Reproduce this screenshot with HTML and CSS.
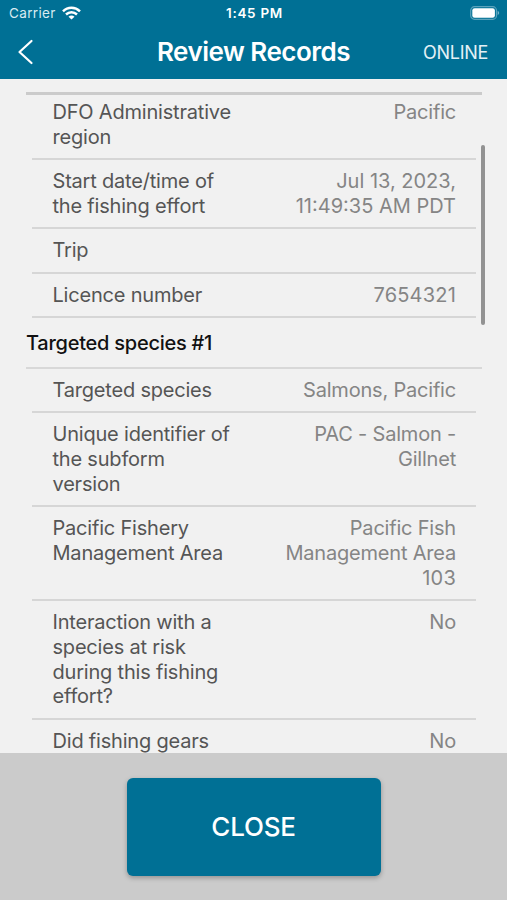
FILE: index.html
```html
<!DOCTYPE html>
<html lang="en">
<head>
<meta charset="utf-8">
<title>Review Records</title>
<link rel="stylesheet" href="styles.css">
</head>
<body>
<div class="app">
  <header class="header">
    <div class="status">
      <div class="carrier"><span>Carrier</span>
        <svg class="wifi" width="19" height="14" viewBox="0 0 19 14" fill="none" stroke="#fff" stroke-width="2.5"><path d="M1 5.3C5.8.6 13.2.6 18 5.3M4 8.5c3.2-3 7.8-3 11 0"/><path d="M9.5 13.6 6.5 10.7c1.7-1.5 4.3-1.5 6 0z" fill="#fff" stroke="none"/></svg>
      </div>
      <div class="clock">1:45 PM</div>
      <svg class="battery" width="30" height="14" viewBox="0 0 30 14"><rect x=".7" y=".7" width="25.8" height="12.6" rx="3.8" fill="none" stroke="#5ba3bc" stroke-width="1.2"/><rect x="2.3" y="2.3" width="22.6" height="9.4" rx="2.3" fill="#fff"/><path d="M27.7 4.8q3 2.2 0 4.4z" fill="#75b4c9"/></svg>
    </div>
    <div class="nav">
      <svg class="back" width="18" height="28" viewBox="0 0 18 28" fill="none" stroke="#fff" stroke-width="2.2" stroke-linecap="round" stroke-linejoin="round"><path d="M15.5 3 3.5 14l12 11"/></svg>
      <h1 class="title">Review Records</h1>
      <span class="online">ONLINE</span>
    </div>
  </header>
  <main class="records">
    <div class="top-rule"></div>
    <div class="row first"><div class="label">DFO Administrative<br>region</div><div class="value">Pacific</div></div>
    <div class="row"><div class="label">Start date/time of<br>the fishing effort</div><div class="value numeric">Jul 13, 2023,<br>11:49:35 AM PDT</div></div>
    <div class="row"><div class="label">Trip</div></div>
    <div class="row"><div class="label">Licence number</div><div class="value numeric wide">7654321</div></div>
    <h2 class="section">Targeted species #1</h2>
    <div class="row"><div class="label">Targeted species</div><div class="value">Salmons, Pacific</div></div>
    <div class="row"><div class="label">Unique identifier of<br>the subform<br>version</div><div class="value">PAC - Salmon -<br>Gillnet</div></div>
    <div class="row"><div class="label">Pacific Fishery<br>Management Area</div><div class="value">Pacific Fish<br>Management Area<br><span class="wide">103</span></div></div>
    <div class="row"><div class="label">Interaction with a<br>species at risk<br>during this fishing<br>effort?</div><div class="value">No</div></div>
    <div class="row"><div class="label">Did fishing gears</div><div class="value">No</div></div>
    <div class="scrollbar"></div>
  </main>
  <footer class="footer"><button class="close">CLOSE</button></footer>
</div>
</body>
</html>
```
FILE: styles.css
```css
* { box-sizing: border-box; }
body {
  margin: 0;
  font-family: Inter, "Liberation Sans", sans-serif;
  background: #f1f1f1;
}
.app { display: flex; flex-direction: column; height: 900px; overflow: hidden; }
.header { flex: none; height: 79px; background: #007095; color: #fff; }
.status {
  display: grid;
  grid-template-columns: 1fr auto 1fr;
  align-items: center;
  height: 26px;
  padding: 0 7px 0 9px;
  font-size: 13.5px;
}
.carrier { display: flex; align-items: center; gap: 6px; color: #d9ebf1; letter-spacing: 0.35px; }
.clock { font-size: 13.5px; font-weight: 600; letter-spacing: 0.7px; }
.battery { justify-self: end; }
.nav {
  display: grid;
  grid-template-columns: 1fr auto 1fr;
  align-items: center;
  height: 52px;
  padding: 0 19px 0 16px;
}
.title { margin: 0 -1.5px 0 1.5px; font-size: 26px; line-height: 32px; font-weight: 600; letter-spacing: -0.5px; }
.online { justify-self: end; font-size: 18px; letter-spacing: -0.3px; color: #e3f1f6; }
.records {
  position: relative;
  flex: none;
  height: 674px;
  overflow: hidden;
  padding: 12.5px 31px 0 32px;
}
.top-rule { height: 3px; margin: 0 -6px; background: #cbcbcb; }
.row {
  display: flex;
  justify-content: space-between;
  padding: 9.1px 20px 8.5px 20.5px;
  border-bottom: 2px solid #d6d6d6;
  font-size: 20px;
  line-height: 24.8px;
  letter-spacing: -0.2px;
}
.row.first { padding-top: 5.5px; }
.label { color: #555; white-space: nowrap; }
.value { color: #858585; text-align: right; white-space: nowrap; }
.numeric { letter-spacing: 0; }
.wide { letter-spacing: 0.2px; }
.section {
  margin: 0 -6px;
  height: 50.5px;
  border-bottom: 2px solid #d8d8d8;
  font-size: 20px;
  line-height: 50px;
  font-weight: 450;
  letter-spacing: -0.25px;
  color: #111;
}
.scrollbar {
  position: absolute;
  top: 66px;
  right: 22px;
  width: 4px;
  height: 180px;
  border-radius: 2px;
  background: #929292;
}
.footer { flex: 1; display: flex; justify-content: center; padding-top: 25px; background: #cbcbcb; }
.close {
  width: 254px;
  height: 98px;
  padding: 0 0 2px;
  border: 0;
  border-radius: 6px;
  background: #007095;
  box-shadow: 0 2px 5px rgba(0, 0, 0, 0.28);
  color: #fff;
  font: 500 26px Inter, "Liberation Sans", sans-serif;
  letter-spacing: -0.2px;
}
```
